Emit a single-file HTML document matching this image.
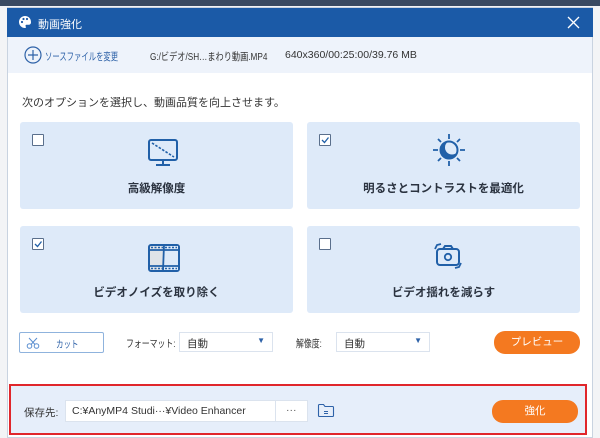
<!DOCTYPE html>
<html><head><meta charset="utf-8"><style>
*{margin:0;padding:0;box-sizing:border-box}
body{width:600px;height:438px;overflow:hidden;background:#f3f4f6;font-family:"Liberation Sans","Noto Sans CJK JP",sans-serif;position:relative;color:#333}
.abs{position:absolute;white-space:nowrap}
.sx{transform:scaleX(0.75);transform-origin:0 0}
.top{left:0;top:0;width:600px;height:6px;background:#3a4a62}
.dlg{left:7px;top:7px;width:586px;height:431px;background:#fff;border:1px solid #c9d3e0}
.hdr{left:7px;top:8px;width:586px;height:29px;background:#1b5aa7;color:#fff;font-size:11px}
.src{left:8px;top:37px;width:584px;height:36px;background:#eef3fb;font-size:11px}
.card{background:#deeaf9;border-radius:3px;width:273px;height:87px}
.cb{width:12px;height:12px;border:1px solid #5a6f8c;background:#fff;position:absolute;left:12px;top:12px;border-radius:1px}
.lbl{position:absolute;width:100%;text-align:center;top:58px;font-size:11.5px;font-weight:bold;color:#2b3340}
.sel{height:20px;border:1px solid #dbe3ee;background:#fff;font-size:10.5px;padding:3px 7px}
.btn{background:#f47920;color:#fff;border-radius:11px;font-size:10.5px;text-align:center}
</style></head><body>
<div class="abs top"></div>
<div class="abs dlg"></div>
<div class="abs hdr">
<svg class="abs" style="left:11px;top:7px" width="14" height="14" viewBox="0 0 14 14"><path d="M7 1a6 6 0 1 0 0 12c1 0 1.2-.8.7-1.5-.6-.8 0-1.8 1-1.8H11a2.5 2.5 0 0 0 2-2.5C13 3.5 10.5 1 7 1z" fill="#fff"/><circle cx="4" cy="7" r="1.1" fill="#1b5aa7"/><circle cx="5.5" cy="4" r="1.1" fill="#1b5aa7"/><circle cx="9" cy="4" r="1.1" fill="#1b5aa7"/></svg>
<span class="abs" style="left:31px;top:8px">動画強化</span>
<svg class="abs" style="left:560px;top:8px" width="13" height="13" viewBox="0 0 13 13"><path d="M1 1L12 12M12 1L1 12" stroke="#fff" stroke-width="1.3"/></svg>
</div>
<div class="abs src">
<svg class="abs" style="left:16px;top:9px" width="18" height="18" viewBox="0 0 18 18"><circle cx="9" cy="9" r="8" fill="none" stroke="#2e62a8" stroke-width="1.2"/><path d="M9 4v10M4 9h10" stroke="#2e62a8" stroke-width="1.2"/></svg>
<span class="abs sx" style="left:37px;top:12px;color:#2e62a8;font-size:10.5px;transform:scaleX(0.7)">ソースファイルを変更</span>
<span class="abs" style="left:142px;top:12px;color:#333;font-size:10.5px;transform:scaleX(0.78);transform-origin:0 0">G:/ビデオ/SH…まわり動画.MP4</span>
<span class="abs" style="left:277px;top:12px;color:#333;font-size:10.5px">640x360/00:25:00/39.76 MB</span>
</div>
<div class="abs" style="left:22px;top:94px;font-size:11px">次のオプションを選択し、動画品質を向上させます。</div>

<div class="abs card" style="left:20px;top:122px"><div class="cb"></div>
<svg class="abs" style="left:127px;top:17px" width="32" height="28" viewBox="0 0 32 28"><rect x="2" y="1" width="28" height="20" rx="2" fill="none" stroke="#2160a8" stroke-width="2"/><path d="M5 4L27 18" stroke="#2160a8" stroke-width="1.6" stroke-dasharray="2.5 1.5"/><path d="M16 21v4M9 26h14" stroke="#2160a8" stroke-width="2"/></svg>
<div class="lbl">高級解像度</div></div>

<div class="abs card" style="left:307px;top:122px"><div class="cb" style="left:12px"><svg width="10" height="10" style="position:absolute;left:0;top:0"><path d="M2 5l2.5 2.5L8.5 2.5" stroke="#2160a8" stroke-width="1.3" fill="none"/></svg></div>
<svg class="abs" style="left:124px;top:10px" width="36" height="36" viewBox="0 0 36 36"><circle cx="18" cy="18" r="8.5" fill="#2160a8"/><circle cx="21" cy="15.5" r="7" fill="#deeaf9"/><circle cx="18" cy="18" r="8.5" fill="none" stroke="#2160a8" stroke-width="2"/><path d="M18 2v5M18 29v5M2 18h5M29 18h5M7 7l3 3M26 26l3 3M29 7l-3 3M7 29l3-3" stroke="#2160a8" stroke-width="1.8"/></svg>
<div class="lbl">明るさとコントラストを最適化</div></div>

<div class="abs card" style="left:20px;top:226px"><div class="cb"><svg width="10" height="10" style="position:absolute;left:0;top:0"><path d="M2 5l2.5 2.5L8.5 2.5" stroke="#2160a8" stroke-width="1.3" fill="none"/></svg></div>
<svg class="abs" style="left:127px;top:17px" width="34" height="30" viewBox="0 0 34 30"><rect x="2" y="2" width="30" height="26" rx="2" fill="#dfe3e8" stroke="#2160a8" stroke-width="2"/><rect x="17" y="3" width="14" height="24" fill="#deeaf9"/><path d="M2 7h30M2 23h30M17 2l-1 26" stroke="#2160a8" stroke-width="1.8"/><path d="M4 4.5h26M4 25.5h26" stroke="#2160a8" stroke-width="1.5" stroke-dasharray="2 1.5"/></svg>
<div class="lbl">ビデオノイズを取り除く</div></div>

<div class="abs card" style="left:307px;top:226px"><div class="cb"></div>
<svg class="abs" style="left:124px;top:13px" width="34" height="34" viewBox="0 0 34 34"><path d="M4 10l2-4 4-1M30 24l-2 4-4 1" stroke="#2160a8" stroke-width="1.8" fill="none"/><rect x="6" y="10" width="22" height="16" rx="3" fill="none" stroke="#2160a8" stroke-width="2"/><path d="M12 10l2-3h6l2 3" stroke="#2160a8" stroke-width="2" fill="none"/><circle cx="17" cy="18" r="3.2" fill="none" stroke="#2160a8" stroke-width="1.8"/></svg>
<div class="lbl">ビデオ揺れを減らす</div></div>

<div class="abs" style="left:19px;top:332px;width:85px;height:21px;border:1px solid #8fb3dd;border-radius:2px;background:#fff;font-size:10px;color:#2e62a8">
<svg class="abs" style="left:6px;top:4px" width="14" height="12" viewBox="0 0 14 12"><circle cx="3.5" cy="9" r="2.3" fill="none" stroke="#5b8fd0"/><circle cx="10.5" cy="9" r="2.3" fill="none" stroke="#5b8fd0"/><path d="M5 7.5L11 1M9 7.5L3 1" stroke="#5b8fd0"/></svg>
<span class="abs sx" style="left:36px;top:3px">カット</span></div>
<span class="abs sx" style="left:126px;top:336px;font-size:10.5px">フォーマット:</span>
<div class="abs sel" style="left:179px;top:332px;width:94px">自動<span style="position:absolute;right:7px;top:3px;color:#2e62a8;font-size:8px">▼</span></div>
<span class="abs sx" style="left:296px;top:336px;font-size:10.5px">解像度:</span>
<div class="abs sel" style="left:336px;top:332px;width:94px">自動<span style="position:absolute;right:7px;top:3px;color:#2e62a8;font-size:8px">▼</span></div>
<div class="abs btn" style="left:494px;top:331px;width:86px;height:23px;line-height:23px">プレビュー</div>

<div class="abs" style="left:9px;top:384px;width:578px;height:51px;background:#e6eefa;border:2px solid #e0262b"></div>
<span class="abs" style="left:24px;top:405px;font-size:10.5px">保存先:</span>
<div class="abs" style="left:65px;top:400px;width:243px;height:22px;background:#fff;border:1px solid #dbe3ee;font-size:10.5px;padding:4px 6px">C:¥AnyMP4 Studi···¥Video Enhancer<div style="position:absolute;left:209px;top:0;width:1px;height:20px;background:#dbe3ee"></div><span style="position:absolute;left:220px;top:3px;color:#555">···</span></div>
<svg class="abs" style="left:317px;top:402px" width="18" height="16" viewBox="0 0 18 16"><path d="M1.5 3.5v10a1 1 0 0 0 1 1h13a1 1 0 0 0 1-1V5.5a1 1 0 0 0-1-1H8L6.5 2.5h-4a1 1 0 0 0-1 1z" fill="none" stroke="#2e62a8" stroke-width="1.1"/><path d="M7 9.5h4M7 11.5h4" stroke="#2e62a8"/></svg>
<div class="abs btn" style="left:492px;top:400px;width:86px;height:23px;line-height:23px">強化</div>
</body></html>
